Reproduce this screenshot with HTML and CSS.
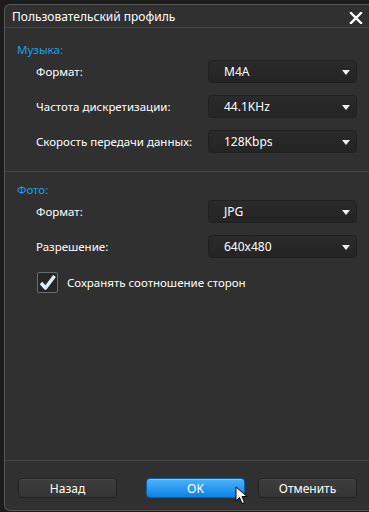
FILE: index.html
```html
<!DOCTYPE html>
<html lang="ru">
<head>
  <meta charset="UTF-8">
  <title>Пользовательский профиль</title>
  <link rel="stylesheet" href="styles.css">
</head>
<body>
  <div class="dialog">
    <div class="titlebar">
      <span class="title">Пользовательский профиль</span>
      <svg class="close" width="14" height="12" viewBox="0 0 14 12">
        <path d="M2 1 L12 11 M12 1 L2 11" stroke="#fff" stroke-width="2.4" stroke-linecap="square"/>
      </svg>
    </div>

    <div class="section music">
      <div class="section-title">Музыка:</div>
      <div class="rows">
        <div class="row">
          <span class="label">Формат:</span>
          <div class="select"><span>M4A</span><i class="arrow"></i></div>
        </div>
        <div class="row">
          <span class="label">Частота дискретизации:</span>
          <div class="select"><span>44.1KHz</span><i class="arrow"></i></div>
        </div>
        <div class="row">
          <span class="label">Скорость передачи данных:</span>
          <div class="select"><span>128Kbps</span><i class="arrow"></i></div>
        </div>
      </div>
    </div>

    <div class="section photo">
      <div class="section-title">Фото:</div>
      <div class="rows">
        <div class="row">
          <span class="label">Формат:</span>
          <div class="select"><span>JPG</span><i class="arrow"></i></div>
        </div>
        <div class="row">
          <span class="label">Разрешение:</span>
          <div class="select"><span>640x480</span><i class="arrow"></i></div>
        </div>
      </div>
      <label class="check">
        <span class="box">
          <svg width="19" height="19" viewBox="0 0 19 19">
            <path d="M3 10 L7.5 15 L16.5 3" fill="none" stroke="#e3f1ff" stroke-width="3.4" stroke-linejoin="round"/>
          </svg>
        </span>
        <span>Сохранять соотношение сторон</span>
      </label>
    </div>

    <div class="footer">
      <button class="btn">Назад</button>
      <div class="btn-group">
        <button class="btn primary">OK</button>
        <button class="btn">Отменить</button>
      </div>
    </div>

    <svg class="cursor" width="13" height="19" viewBox="0 0 13 19">
      <path d="M1 1 L1 15 L4.5 11.5 L7 17.5 L9.5 16.5 L7 10.5 L12 10.5 Z" fill="#fff" stroke="#000" stroke-width="1"/>
    </svg>
  </div>
</body>
</html>
```

FILE: styles.css
```css
* {
  margin: 0;
  padding: 0;
  box-sizing: border-box;
}

body {
  font-family: "Noto Sans", "Open Sans", sans-serif;
  font-size: 11.5px;
  background: #1c1c1c;
  color: #fff;
  overflow: hidden;
}

.dialog {
  position: relative;
  margin: 4px 0 0 4px;
  width: 365px;
  height: 507px;
  background: #303030;
  border: 1px solid #575757;
  border-right: none;
  border-radius: 6px 0 0 6px;
  display: flex;
  flex-direction: column;
}

.titlebar {
  height: 23px;
  border-bottom: 1px solid #464646;
  display: flex;
  align-items: center;
  justify-content: space-between;
  padding: 1px 6px 0 7px;
}

.title {
  font-size: 12px;
}

.close {
  margin-top: 2px;
}

.section {
  padding: 14px 12px 18px 12px;
  border-bottom: 1px solid #464646;
}

.section.photo {
  padding-top: 10px;
  border-bottom: none;
}

.section-title {
  color: #1f9fe6;
  line-height: 16px;
  margin-bottom: 2px;
}

.rows {
  display: flex;
  flex-direction: column;
  gap: 12px;
}

.row {
  display: flex;
  align-items: center;
  padding-left: 19px;
}

.label {
  flex: 1;
}

.select {
  width: 149px;
  height: 23px;
  font-size: 12px;
  background: linear-gradient(#2a2a2a, #242424);
  border: 1px solid #202020;
  border-radius: 4px;
  display: flex;
  align-items: center;
  justify-content: space-between;
  padding: 0 6px 0 15px;
}

.arrow {
  width: 0;
  height: 0;
  border-left: 4px solid transparent;
  border-right: 4px solid transparent;
  border-top: 5px solid #f2f2f2;
  margin-top: 1px;
}

.check {
  display: flex;
  align-items: center;
  gap: 9px;
  margin: 14px 0 0 20px;
}

.box {
  width: 21px;
  height: 21px;
  border: 1px solid #6c6c6c;
  border-radius: 2px;
  background: #262626;
  display: flex;
  align-items: center;
  justify-content: center;
}

.footer {
  margin-top: auto;
  border-top: 1px solid #464646;
  padding: 17px 12px 12px 13px;
  display: flex;
  justify-content: space-between;
}

.btn-group {
  display: flex;
  gap: 13px;
}

.btn {
  width: 99px;
  height: 20px;
  font-family: inherit;
  font-size: 12px;
  color: #fff;
  background: linear-gradient(#3d3d3d, #353535);
  border: 1px solid #222;
  border-radius: 4px;
  box-shadow: inset 0 1px 0 #4a4a4a;
}

.btn.primary {
  background: linear-gradient(#4cb4ff, #0c82e4);
  border-color: #0a5fa8;
  box-shadow: inset 0 1px 0 #7cc8ff;
}

.cursor {
  position: absolute;
  left: 230px;
  top: 481px;
}
```
